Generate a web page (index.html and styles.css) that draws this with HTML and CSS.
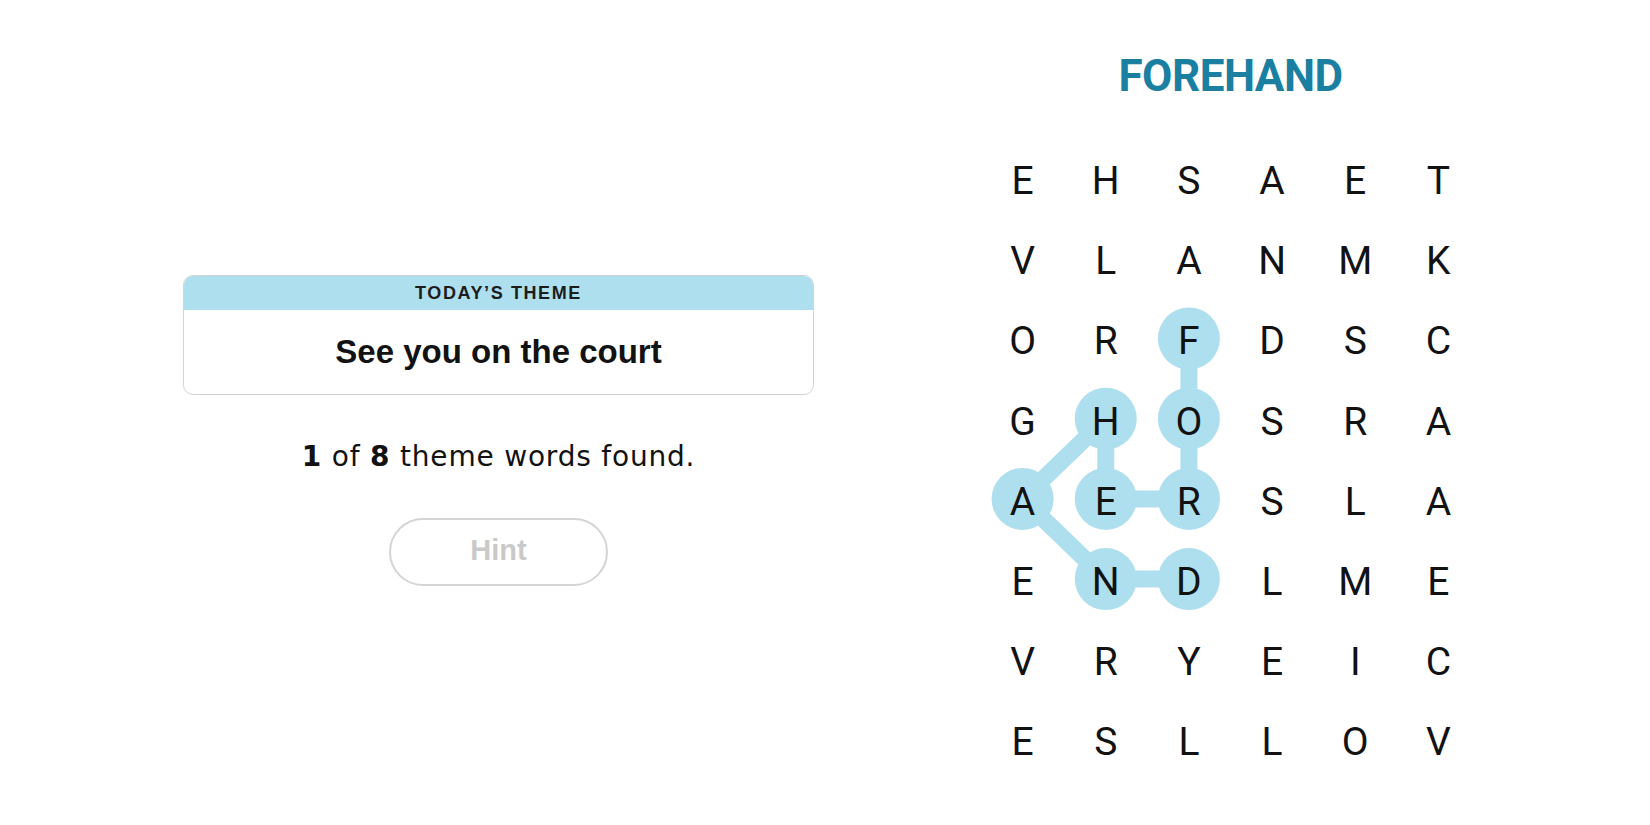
FILE: index.html
```html
<!DOCTYPE html>
<html lang="en">
<head>
<meta charset="utf-8">
<title>Strands</title>
<link rel="stylesheet" href="styles.css">
</head>
<body>
<main class="game">
  <section class="info">
    <div class="theme-card">
      <div class="theme-head">TODAY’S THEME</div>
      <div class="theme-body">See you on the court</div>
    </div>
    <p class="progress"><b>1</b> of <b>8</b> theme words found.</p>
    <button class="hint" type="button">Hint</button>
  </section>
  <section class="board">
    <h1 class="found-word">FOREHAND</h1>
    <div class="grid-wrap">
      <svg class="trail" width="499" height="642" viewBox="0 0 499 642" aria-hidden="true">
        <polyline points="207.9,197.5 207.9,277.7 207.9,357.9 124.75,357.9 124.75,277.7 41.58,357.9 124.75,438.1 207.9,438.1" fill="none" stroke="#aedfee" stroke-width="17" stroke-linejoin="round"/>
        <g fill="#aedfee">
          <circle cx="207.9" cy="197.5" r="31"/>
          <circle cx="207.9" cy="277.7" r="31"/>
          <circle cx="207.9" cy="357.9" r="31"/>
          <circle cx="124.75" cy="357.9" r="31"/>
          <circle cx="124.75" cy="277.7" r="31"/>
          <circle cx="41.58" cy="357.9" r="31"/>
          <circle cx="124.75" cy="438.1" r="31"/>
          <circle cx="207.9" cy="438.1" r="31"/>
        </g>
      </svg>
      <div class="grid">
        <span>E</span><span>H</span><span>S</span><span>A</span><span>E</span><span>T</span>
        <span>V</span><span>L</span><span>A</span><span>N</span><span>M</span><span>K</span>
        <span>O</span><span>R</span><span>F</span><span>D</span><span>S</span><span>C</span>
        <span>G</span><span>H</span><span>O</span><span>S</span><span>R</span><span>A</span>
        <span>A</span><span>E</span><span>R</span><span>S</span><span>L</span><span>A</span>
        <span>E</span><span>N</span><span>D</span><span>L</span><span>M</span><span>E</span>
        <span>V</span><span>R</span><span>Y</span><span>E</span><span>I</span><span>C</span>
        <span>E</span><span>S</span><span>L</span><span>L</span><span>O</span><span>V</span>
      </div>
    </div>
  </section>
</main>
</body>
</html>
```

FILE: styles.css
```css
* { box-sizing: border-box; }

html, body {
  margin: 0;
  padding: 0;
  background: #ffffff;
  color: #121212;
}

body {
  font-family: "Liberation Sans", Arial, sans-serif;
  width: 1650px;
  height: 825px;
  overflow: hidden;
}

.game {
  display: flex;
  align-items: flex-start;
  padding-left: 183px;
  gap: 167px;
}

/* left panel */
.info {
  width: 631px;
  padding-top: 275px;
  display: flex;
  flex-direction: column;
  align-items: center;
}

.theme-card {
  width: 631px;
  border: 1px solid #d3d3d3;
  border-radius: 10px;
  overflow: hidden;
  background: #fff;
}

.theme-head {
  height: 34px;
  background: #aedfee;
  display: flex;
  align-items: center;
  justify-content: center;
  font-size: 18px;
  font-weight: 700;
  letter-spacing: 1.6px;
  color: #1c1c1c;
}

.theme-body {
  height: 84px;
  display: flex;
  align-items: center;
  justify-content: center;
  font-size: 33px;
  font-weight: 700;
  color: #121212;
}

.progress {
  margin: 45px 0 0;
  font-family: "DejaVu Sans", sans-serif;
  font-size: 28px;
  line-height: 33px;
  letter-spacing: 0.8px;
  color: #121212;
}

.progress b { font-weight: 700; }

.hint {
  margin-top: 45px;
  width: 219px;
  height: 68px;
  border: 2px solid #d4d4d4;
  border-radius: 34px;
  background: #fff;
  font-family: "Liberation Sans", Arial, sans-serif;
  font-size: 29px;
  font-weight: 700;
  color: #c9c9c9;
  padding: 0 0 4px;
}

/* right panel */
.board {
  width: 499px;
  padding-top: 51px;
  display: flex;
  flex-direction: column;
  align-items: center;
}

.found-word {
  margin: 0;
  font-family: Roboto, "Liberation Sans", sans-serif;
  font-size: 44px;
  line-height: 50px;
  font-weight: 700;
  letter-spacing: -0.5px;
  color: #1a7fa1;
}

.grid-wrap {
  position: relative;
  margin-top: 40px;
  width: 499px;
}

.trail {
  position: absolute;
  left: 0;
  top: 0;
}

.grid {
  position: relative;
  display: grid;
  grid-template-columns: repeat(6, 83.17px);
  grid-auto-rows: 80.2px;
}

.grid span {
  display: flex;
  align-items: center;
  justify-content: center;
  font-family: Roboto, "Liberation Sans", sans-serif;
  font-size: 39px;
  font-weight: 400;
  color: #121212;
}
```
